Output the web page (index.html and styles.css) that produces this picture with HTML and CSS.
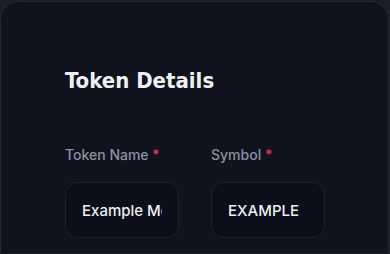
FILE: index.html
```html
<!DOCTYPE html>
<html lang="en">

<head>
    <meta charset="UTF-8">
    <meta name="viewport" content="width=device-width, initial-scale=1.0">
    <title>Token Details</title>
    <link rel="stylesheet" href="styles.css">
</head>

<body>
    <div class="card">
        <h2 class="card-title">Token Details</h2>
        <div class="field-row">
            <div class="field">
                <label class="field-label">Token Name <span class="req">*</span></label>
                <input class="field-input" type="text" value="Example Meme Token">
            </div>
            <div class="field">
                <label class="field-label">Symbol <span class="req">*</span></label>
                <input class="field-input" type="text" value="EXAMPLE">
            </div>
        </div>
    </div>
</body>

</html>
```

FILE: styles.css
```css
* {
    margin: 0;
    padding: 0;
    box-sizing: border-box;
}

body {
    background: #1b1e2a;
    font-family: Inter, "Noto Sans", sans-serif;
    overflow: hidden;
}

.card {
    margin-top: 1px;
    width: 389px;
    height: 252px;
    padding: 65px 64px 0;
    background: #10131e;
    border: 1px solid #232734;
    border-bottom: none;
    border-radius: 18px 18px 0 0;
}

.card-title {
    font-family: "DejaVu Sans Condensed", "DejaVu Sans", sans-serif;
    font-size: 22px;
    font-weight: 700;
    line-height: 28px;
    color: #eef0f6;
}

.field-row {
    display: flex;
    gap: 32px;
    margin-top: 50px;
}

.field {
    display: flex;
    flex-direction: column;
    width: 114px;
}

.field-label {
    font-size: 14px;
    line-height: 20px;
    font-weight: 500;
    color: #8b91a3;
    margin-bottom: 17px;
}

.req {
    color: #e8335f;
}

.field-input {
    height: 56px;
    padding: 0 16px;
    background: #0c0f19;
    border: 1px solid #1d212d;
    border-radius: 12px;
    color: #eceef4;
    font-family: Inter, "Noto Sans", sans-serif;
    font-size: 15px;
    font-weight: 500;
    outline: none;
}
```
